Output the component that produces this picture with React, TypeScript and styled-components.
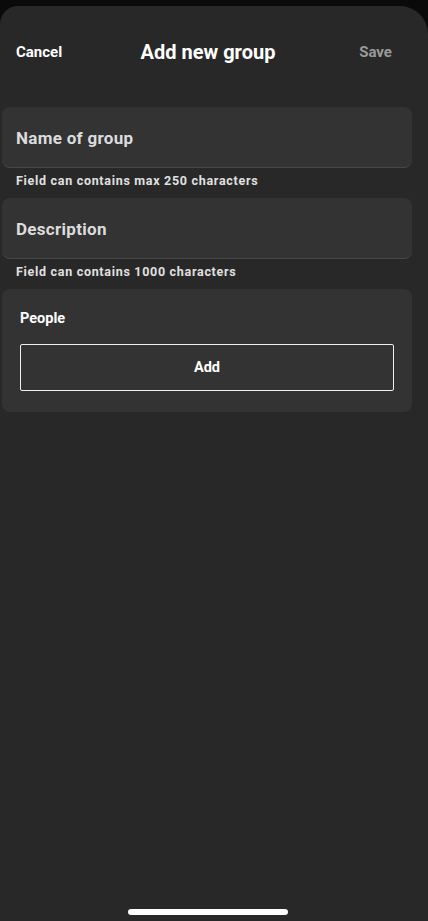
import React from 'react'
import styled, { createGlobalStyle } from 'styled-components'

const Global = createGlobalStyle`
  html, body {
    margin: 0;
    padding: 0;
    background: #0a0a0a;
  }
  body {
    font-family: Roboto, 'Liberation Sans', sans-serif;
    -webkit-font-smoothing: antialiased;
  }
`

const Screen = styled.div`
  height: 921px;
  padding-top: 6px;
  box-sizing: border-box;
  background: #0a0a0a;
`

const Sheet = styled.div`
  height: 915px;
  background: #282828;
  border-radius: 18px 28px 0 0;
  display: flex;
  flex-direction: column;
`

const Header = styled.header`
  display: flex;
  align-items: center;
  justify-content: space-between;
  height: 92px;
  padding: 0 36px 0 16px;
`

const HeaderAction = styled.button<{ $muted?: boolean }>`
  border: 0;
  background: none;
  padding: 0;
  font-family: inherit;
  font-size: 15px;
  font-weight: 700;
  color: ${p => (p.$muted ? '#9a9a9a' : '#ffffff')};
  width: 56px;
  text-align: ${p => (p.$muted ? 'right' : 'left')};
`

const Title = styled.h1`
  margin: 0 0 0 8px;
  font-size: 20px;
  font-weight: 700;
  color: #ffffff;
`

const Form = styled.div`
  display: flex;
  flex-direction: column;
  padding: 9px 16px 0 2px;
`

const Field = styled.div`
  display: flex;
  flex-direction: column;
  margin-bottom: 9px;
`

const Input = styled.div`
  height: 61px;
  display: flex;
  align-items: center;
  padding: 2px 14px 0;
  background: #333333;
  border-radius: 8px;
  border-bottom: 1.5px solid #474747;
  box-sizing: border-box;
  font-size: 17px;
  font-weight: 700;
  color: #dcdcdc;
  letter-spacing: 0.3px;
`

const Hint = styled.div`
  padding: 5px 14px 0;
  font-size: 12.5px;
  font-weight: 700;
  color: #e0e0e0;
  letter-spacing: 0.7px;
  line-height: 16px;
`

const Panel = styled.section`
  background: #333333;
  border-radius: 8px;
  padding: 21px 18px 21px;
  display: flex;
  flex-direction: column;
  gap: 17px;
`

const PanelTitle = styled.div`
  font-size: 14.5px;
  font-weight: 700;
  line-height: 17px;
  color: #ffffff;
`

const AddButton = styled.button`
  height: 47px;
  border: 1.5px solid #f0f0f0;
  border-radius: 2px;
  background: transparent;
  color: #ffffff;
  font-family: inherit;
  font-size: 14.5px;
  font-weight: 700;
`

const Spacer = styled.div`
  flex: 1;
`

const HomeBar = styled.div`
  width: 160px;
  height: 6px;
  border-radius: 3px;
  background: #ffffff;
  align-self: center;
  margin: 0 12px 6px 0;
`

export default function App() {
  return (
    <>
      <Global />
      <Screen>
        <Sheet>
          <Header>
            <HeaderAction>Cancel</HeaderAction>
            <Title>Add new group</Title>
            <HeaderAction $muted>Save</HeaderAction>
          </Header>
          <Form>
            <Field>
              <Input>Name of group</Input>
              <Hint>Field can contains max 250 characters</Hint>
            </Field>
            <Field>
              <Input>Description</Input>
              <Hint>Field can contains 1000 characters</Hint>
            </Field>
            <Panel>
              <PanelTitle>People</PanelTitle>
              <AddButton>Add</AddButton>
            </Panel>
          </Form>
          <Spacer />
          <HomeBar />
        </Sheet>
      </Screen>
    </>
  )
}
